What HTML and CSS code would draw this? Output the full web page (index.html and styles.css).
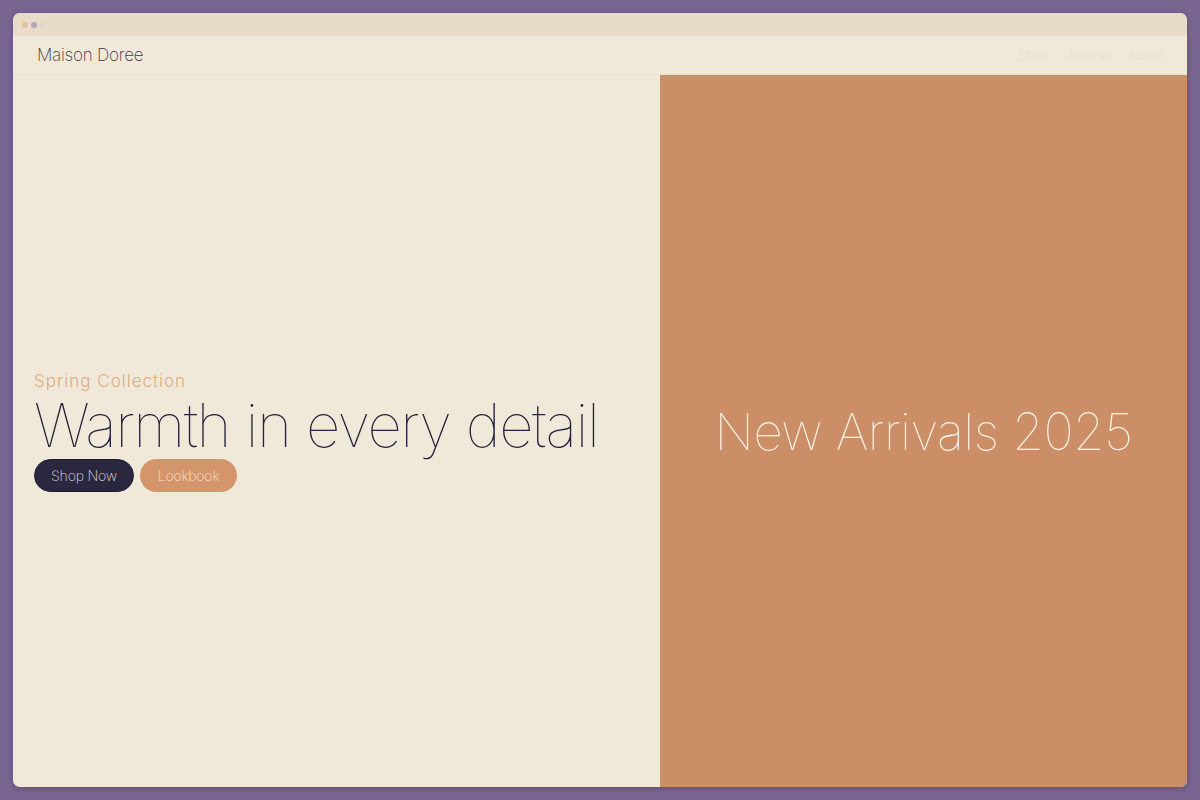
FILE: index.html
```html
<!DOCTYPE html>
<html lang="en">
<head>
<meta charset="utf-8">
<title>Maison Doree</title>
<link rel="stylesheet" href="styles.css">
</head>
<body>
<div class="window">
  <div class="titlebar">
    <span class="dot dot-a"></span>
    <span class="dot dot-b"></span>
    <span class="dot dot-c"></span>
  </div>
  <header class="nav">
    <div class="brand">Maison Doree</div>
    <nav class="links">
      <a href="#">Shop</a>
      <a href="#">Journal</a>
      <a href="#">About</a>
    </nav>
  </header>
  <main class="hero">
    <section class="hero-left">
      <p class="eyebrow">Spring Collection</p>
      <h1 class="headline">Warmth in every detail</h1>
      <div class="actions">
        <a class="btn btn-dark" href="#">Shop Now</a>
        <a class="btn btn-warm" href="#">Lookbook</a>
      </div>
    </section>
    <section class="hero-right">
      <h2 class="arrivals">New Arrivals 2025</h2>
    </section>
  </main>
</div>
</body>
</html>
```

FILE: styles.css
```css
* { box-sizing: border-box; }
html, body { margin: 0; padding: 0; }
body {
  background: #786691;
  font-family: "Inter", "Liberation Sans", sans-serif;
  padding: 13px;
  height: 800px;
}
.window {
  width: 1174px;
  height: 774px;
  background: #f0e9da;
  border-radius: 7px;
  overflow: hidden;
  display: flex;
  flex-direction: column;
  box-shadow: 0 2px 6px rgba(40, 20, 60, 0.25);
}
.titlebar {
  height: 23px;
  background: #e8dcc8;
  display: flex;
  align-items: center;
  gap: 3px;
  padding-left: 9px;
}
.dot {
  width: 6px;
  height: 6px;
  border-radius: 50%;
}
.dot-a { background: #e6bd9e; }
.dot-b { background: #b5a6bc; }
.dot-c { background: #e0d6c8; }
.nav {
  height: 39px;
  border-bottom: 1px solid #e8dfcf;
  display: flex;
  align-items: center;
  justify-content: space-between;
  padding: 0 23px 0 24px;
}
.brand {
  font-size: 17px;
  font-weight: 200;
  color: #3b3544;
  letter-spacing: -0.2px;
}
.links {
  display: flex;
  gap: 16px;
}
.links a {
  font-size: 13.5px;
  font-weight: 200;
  color: #e3d9c8;
  text-decoration: none;
}
.hero {
  flex: 1;
  display: flex;
}
.hero-left {
  width: 646px;
  display: flex;
  flex-direction: column;
  justify-content: center;
  padding: 0 21px;
}
.eyebrow {
  margin: 0;
  font-size: 17px;
  font-weight: 300;
  letter-spacing: 1px;
  color: #e1a982;
}
.headline {
  margin: 0;
  font-size: 60px;
  font-weight: 100;
  color: #25223a;
  letter-spacing: -1.5px;
  line-height: 68px;
}
.actions {
  display: flex;
  gap: 6px;
}
.btn {
  height: 33px;
  border-radius: 17px;
  display: inline-flex;
  align-items: center;
  justify-content: center;
  font-size: 14px;
  font-weight: 200;
  text-decoration: none;
  letter-spacing: -0.2px;
}
.btn-dark {
  width: 100px;
  background: #2b2741;
  color: #e6ded6;
  border: 1px solid #1e1b30;
}
.btn-warm {
  width: 97px;
  background: #d4956a;
  color: #f6e6d6;
}
.hero-right {
  flex: 1;
  background: #cc8e66;
  display: flex;
  align-items: center;
  justify-content: center;
  border-left: 1px solid #f3e6d6;
}
.arrivals {
  margin: 0;
  font-size: 51px;
  font-weight: 100;
  color: #fff8ef;
  letter-spacing: -0.5px;
}
```
